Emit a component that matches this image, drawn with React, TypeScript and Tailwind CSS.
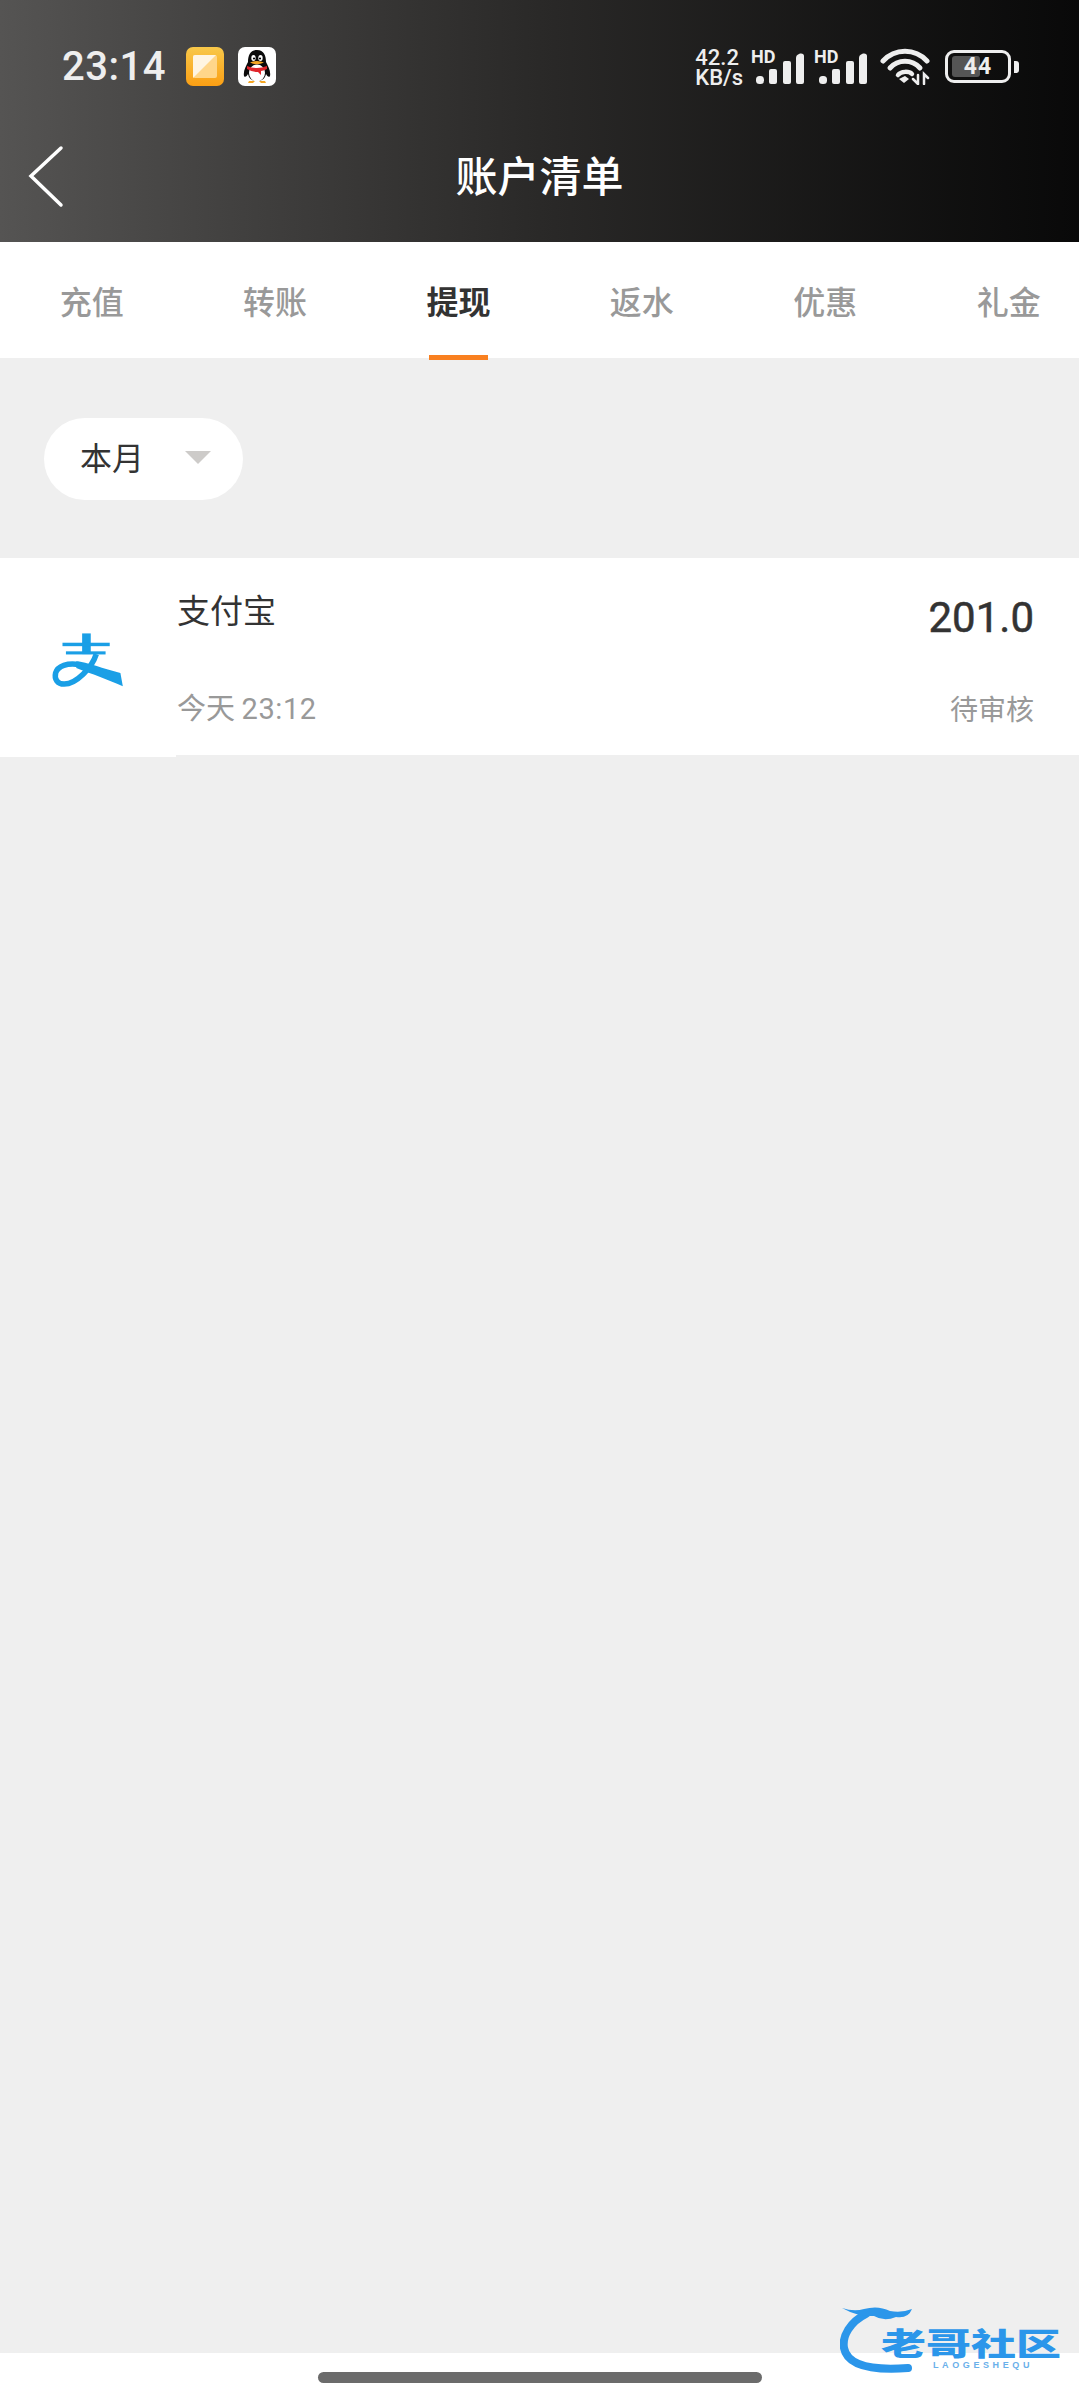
const cjk = "font-['Noto_Sans_CJK_SC','Noto_Sans',sans-serif]";

const tabs = ['充值', '转账', '提现', '返水', '优惠', '礼金'];

const SignalBars = () => (
    <svg width="48" height="32" viewBox="0 0 48 32" fill="#eeeeee">
        <rect x="0" y="24" width="8" height="8" rx="3.5" />
        <rect x="13" y="17" width="8" height="15" rx="2" />
        <rect x="27" y="9" width="8" height="23" rx="2" />
        <path d="M40 6 Q40 3 43 2 L44 1.5 Q48 1 48 4 V30 Q48 32 46 32 H42 Q40 32 40 30 Z" />
    </svg>
);

const NoteIcon = () => (
    <svg width="38" height="39" viewBox="0 0 38 39">
        <defs>
            <linearGradient id="noteBg" x1="0" y1="0" x2="0" y2="1">
                <stop offset="0" stopColor="#f8c84a" />
                <stop offset="1" stopColor="#fb9f14" />
            </linearGradient>
        </defs>
        <rect width="38" height="39" rx="7" fill="url(#noteBg)" />
        <rect x="7" y="8" width="24" height="23" rx="2" fill="#ffd68a" />
        <path d="M7 31 V10 Q7 8 9 8 H30 Z" fill="#fff5e2" />
    </svg>
);

const QQIcon = () => (
    <svg width="38" height="39" viewBox="0 0 38 39">
        <rect width="38" height="39" rx="7" fill="#ffffff" />
        <path d="M19 3 C12 3 10 9 10 15 C8 19 5 24 6 29 C7 31 9 29 10 27 C11 31 13 34 19 34 C25 34 27 31 28 27 C29 29 31 31 32 29 C33 24 30 19 28 15 C28 9 26 3 19 3 Z" fill="#0b0b0b" />
        <ellipse cx="19" cy="26" rx="8" ry="8.5" fill="#ffffff" />
        <ellipse cx="15.5" cy="11" rx="2.2" ry="3" fill="#ffffff" />
        <ellipse cx="22.5" cy="11" rx="2.2" ry="3" fill="#ffffff" />
        <circle cx="16" cy="11.5" r="1.1" fill="#000000" />
        <circle cx="22" cy="11.5" r="1.1" fill="#000000" />
        <path d="M12 15.5 Q19 12.5 26 15.5 Q19 19 12 15.5 Z" fill="#f5a623" />
        <path d="M9 19 Q19 23 29 19 L29 22 Q25 24 23 24 L23 28 L20 25 Q14 25 9 22 Z" fill="#e0262c" />
        <path d="M11 34 L17 34 L15 36 L10 36 Z" fill="#f5a623" />
        <path d="M21 34 L27 34 L28 36 L23 36 Z" fill="#f5a623" />
    </svg>
);

const WifiIcon = () => (
    <svg width="50" height="38" viewBox="0 0 50 38" fill="none" stroke="#eeeeee" strokeLinecap="round">
        <path d="M3 14 C15 1 35 1 47 14" strokeWidth="5" />
        <path d="M10 21 C18 12 32 12 40 21" strokeWidth="5" />
        <path d="M18 28 C21 24 29 24 32 27" strokeWidth="4.5" />
        <path d="M19 32 L25 29 L29 32 L24 36 Z" fill="#eeeeee" stroke="none" />
        <path d="M38 37 V28 M33 32 L38 37" strokeWidth="2.5" />
        <path d="M44 37 V27 L48 31" strokeWidth="2.5" />
    </svg>
);

const AlipayLogo = () => (
    <svg width="120" height="100" viewBox="0 0 348 290" fill="#1a9fe6">
        <rect x="157" y="65" width="25" height="60" />
        <rect x="100" y="92" width="137" height="10" />
        <rect x="110" y="117" width="115" height="9" />
        <path d="M198 125 C185 165 140 212 105 212 C85 212 76 197 80 180 C86 158 115 150 148 155" fill="none" stroke="#1a9fe6" strokeWidth="16" />
        <path d="M140 146 C170 148 220 168 268 180 L275 218 C230 198 190 184 140 165 Z" />
    </svg>
);

const Watermark = () => (
    <div className="absolute left-[840px] top-[2304px] h-[72px] w-[225px]">
        <svg className="absolute left-0 top-0" width="100" height="72" viewBox="0 0 100 72" fill="none">
            <path d="M26 10 C10 18 2 32 4 44 C7 60 28 67 68 64" stroke="#2b96ea" strokeWidth="8" strokeLinecap="round" />
            <path d="M2 4 Q14 8 24 5 Q38 1 50 7 Q62 9 72 5 Q68 15 56 13 Q44 18 34 12 Q18 13 2 4 Z" fill="#2b96ea" />
        </svg>
        <div className={`${cjk} absolute left-[41px] top-[18px] origin-center scale-y-[0.68] whitespace-nowrap text-[45px] font-black leading-[40px] text-[#2b96ea]`}>
            老哥社区
        </div>
        <div className="absolute left-[93px] top-[57px] whitespace-nowrap font-['Liberation_Sans',sans-serif] text-[9px] font-bold leading-[9px] tracking-[3.6px] text-[#6ab0ea]">
            LAOGESHEQU
        </div>
    </div>
);

export default function App() {
    return (
        <div className={`${cjk} relative flex h-[2400px] w-[1079px] flex-col overflow-hidden bg-[#efefef]`}>
            {/* header */}
            <header className="h-[242px] bg-gradient-to-r from-[#555453] via-[#2a2928] via-50% to-[#090909]">
                <div className="flex h-[134px] items-start pl-[62px] pr-[60px] pt-[47px]">
                    <span className="font-['Roboto',sans-serif] text-[40px] font-medium leading-[40px] tracking-[0.5px] text-[#eeeeee]">23:14</span>
                    <div className="ml-[20px] flex gap-[14px]">
                        <NoteIcon />
                        <QQIcon />
                    </div>
                    <div className="ml-auto flex items-start">
                        <div className="mt-[1px] font-['Roboto',sans-serif] text-[22px] font-medium leading-[20px] text-[#eeeeee]">
                            <div>42.2</div>
                            <div>KB/s</div>
                        </div>
                        <div className="relative ml-[8px] h-[37px] w-[53px]">
                            <span className="absolute left-0 top-[3px] font-['Roboto',sans-serif] text-[18px] font-bold leading-[14px] text-[#eeeeee]">HD</span>
                            <div className="absolute bottom-0 right-0">
                                <SignalBars />
                            </div>
                        </div>
                        <div className="relative ml-[10px] h-[37px] w-[53px]">
                            <span className="absolute left-0 top-[3px] font-['Roboto',sans-serif] text-[18px] font-bold leading-[14px] text-[#eeeeee]">HD</span>
                            <div className="absolute bottom-0 right-0">
                                <SignalBars />
                            </div>
                        </div>
                        <div className="ml-[13px]">
                            <WifiIcon />
                        </div>
                        <div className="ml-[15px] mt-[3px] flex items-center gap-[3px]">
                            <div className="relative flex h-[33px] w-[66px] items-center justify-center rounded-[9px] border-[3px] border-[#eeeeee]">
                                <div className="absolute bottom-[3px] left-[4px] top-[3px] w-[28px] rounded-[3px] bg-[#555555]" />
                                <span className="relative font-['Roboto',sans-serif] text-[23px] font-bold leading-none tracking-[1px] text-[#eeeeee]">44</span>
                            </div>
                            <div className="h-[12px] w-[5px] rounded-r-[3px] bg-[#eeeeee]" />
                        </div>
                    </div>
                </div>
                <div className="relative flex h-[84px] items-start justify-center">
                    <svg className="absolute left-[28px] top-[11px]" width="38" height="64" viewBox="0 0 38 64" fill="none" stroke="#ffffff" strokeWidth="3.5" strokeLinecap="round">
                        <path d="M33 3 L3 31 L33 60" />
                    </svg>
                    <h1 className="mt-[13px] text-[42px] font-medium leading-[54px] text-white">账户清单</h1>
                </div>
            </header>

            {/* tabs */}
            <nav className="relative flex h-[116px] bg-white">
                {tabs.map((tab) => (
                    <div key={tab} className="relative flex w-[183.4px] shrink-0 justify-center pt-[36px]">
                        <span className={tab === '提现' ? 'text-[32px] font-bold leading-[44px] text-[#333333]' : 'text-[32px] font-medium leading-[44px] text-[#999999]'}>
                            {tab}
                        </span>
                        {tab === '提现' && <div className="absolute bottom-[-2px] left-[62px] h-[5px] w-[59px] bg-[#f98020]" />}
                    </div>
                ))}
            </nav>

            {/* filter */}
            <div className="flex px-[44px] pt-[60px]">
                <div className="flex h-[82px] w-[199px] items-center rounded-full bg-white pl-[36px]">
                    <span className="-translate-y-[3px] text-[32px] leading-none text-[#333333]">本月</span>
                    <div className="ml-[41px] h-0 w-0 -translate-y-[2px] border-x-[13px] border-t-[13px] border-x-transparent border-t-[#cdcbc9]" />
                </div>
            </div>

            {/* record */}
            <div className="mt-[58px] flex items-stretch">
                <div className="flex h-[199px] w-[176px] shrink-0 items-center bg-white pl-[28px]">
                    <div className="mt-[6px]">
                        <AlipayLogo />
                    </div>
                </div>
                <div className="flex h-[197px] flex-1 flex-col justify-between bg-white pb-[26px] pl-[1px] pr-[45px] pt-[28px]">
                    <div className="flex items-start justify-between">
                        <span className="text-[33px] leading-[46px] text-[#333333]">支付宝</span>
                        <span className="mt-[8px] font-['Roboto',sans-serif] text-[42px] font-normal leading-[48px] text-[#333333] [-webkit-text-stroke:0.5px_#333333]">201.0</span>
                    </div>
                    <div className="flex items-center justify-between">
                        <span className="text-[29px] leading-[40px] text-[#999999]">今天 <span className="font-['Roboto',sans-serif] tracking-[0.6px]">23:12</span></span>
                        <span className="text-[28px] leading-[40px] text-[#999999]">待审核</span>
                    </div>
                </div>
            </div>

            {/* gesture bar */}
            <div className="mt-auto flex h-[47px] justify-center bg-white pt-[19px]">
                <div className="h-[11px] w-[444px] rounded-full bg-[#6b6b6b]" />
            </div>

            <Watermark />
        </div>
    );
}
